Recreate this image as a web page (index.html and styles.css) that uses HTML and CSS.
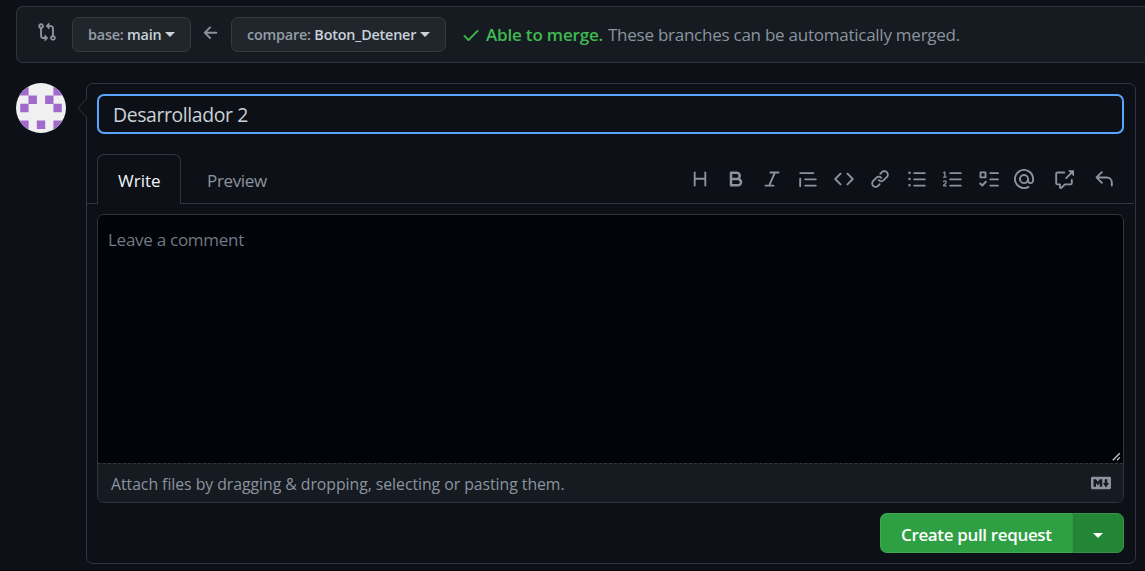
FILE: index.html
```
<!DOCTYPE html>
<html lang="en">
<head>
<meta charset="utf-8">
<title>Open a pull request</title>
<link rel="stylesheet" href="styles.css">
</head>
<body>
<section class="range">
  <svg class="icon compare-icon" viewBox="0 0 16 16"><path fill-rule="evenodd" d="M9.573.677L7.177 3.073a.25.25 0 000 .354l2.396 2.396A.25.25 0 0010 5.646V4h1a1 1 0 011 1v5.628a2.251 2.251 0 101.5 0V5A2.5 2.5 0 0011 2.5h-1V.854a.25.25 0 00-.427-.177zM6 12v-1.646a.25.25 0 01.427-.177l2.396 2.396a.25.25 0 010 .354l-2.396 2.396A.25.25 0 016 15.146V13.5H5A2.5 2.5 0 012.5 11V5.372a2.25 2.25 0 111.5 0V11a1 1 0 001 1h1zM4 3.25a.75.75 0 10-1.5 0 .75.75 0 001.5 0zM12.75 12a.75.75 0 100 1.5.75.75 0 000-1.5z"/></svg>
  <button class="branch base"><span class="label">base: <b>main</b></span><i class="caret"></i></button>
  <svg class="icon arrow-icon" viewBox="0 0 16 16"><path d="M7.78 12.53a.75.75 0 01-1.06 0L2.47 8.28a.75.75 0 010-1.06l4.25-4.25a.75.75 0 011.06 1.06L4.81 7h7.44a.75.75 0 010 1.5H4.81l2.97 2.97a.75.75 0 010 1.06z"/></svg>
  <button class="branch head"><span class="label">compare: <b>Boton_Detener</b></span><i class="caret"></i></button>
  <svg class="icon check-icon" viewBox="0 0 16 16"><path d="M13.78 4.22a.75.75 0 010 1.06l-7.25 7.25a.75.75 0 01-1.06 0L2.22 9.28a.75.75 0 011.06-1.06L6 10.94l6.72-6.72a.75.75 0 011.06 0z"/></svg>
  <strong class="able">Able to merge.</strong>
  <span class="merge-note">These branches can be automatically merged.</span>
</section>

<main class="compose">
  <svg class="avatar" viewBox="0 0 50 50">
    <clipPath id="round"><circle cx="25" cy="25" r="25"/></clipPath>
    <g clip-path="url(#round)">
      <rect width="50" height="50" fill="#f0f0f0"/>
      <path fill="#a26bcb" d="M4.2 4.2h8.4v8.4H4.2zM37.4 4.2h8.4v8.4h-8.4zM12.5 12.5h8.4v8.4h-8.4zM29.1 12.5h8.4v8.4h-8.4zM4.2 20.8h8.4v8.4H4.2zM37.4 20.8h8.4v8.4h-8.4zM4.2 37.5h8.4v8.4H4.2zM20.8 37.5h8.4v8.4h-8.4zM37.4 37.5h8.4v8.4h-8.4z"/>
    </g>
  </svg>
  <form class="box">
    <svg class="pointer" viewBox="0 0 10 20"><path d="M10 0.5L1 10l9 9.5"/></svg>
    <div class="title-input">Desarrollador 2</div>
    <div class="tabs">
      <div class="tab active"><span>Write</span></div>
      <div class="tab preview"><span>Preview</span></div>
      <div class="toolbar">
        <svg class="icon" viewBox="0 0 16 16"><path d="M3.75 2a.75.75 0 01.75.75V7h7V2.75a.75.75 0 011.5 0v10.5a.75.75 0 01-1.5 0V8.5h-7v4.75a.75.75 0 01-1.5 0V2.75A.75.75 0 013.75 2z"/></svg>
        <svg class="icon" viewBox="0 0 16 16"><path fill-rule="evenodd" d="M4 2a1 1 0 00-1 1v10a1 1 0 001 1h5.5a3.5 3.5 0 001.852-6.47A3.5 3.5 0 008.5 2H4zm4.5 5a1.5 1.5 0 100-3H5v3h3.5zM5 9v3h4.5a1.5 1.5 0 000-3H5z"/></svg>
        <svg class="icon" viewBox="0 0 16 16"><path d="M6 2.75A.75.75 0 016.75 2h6.5a.75.75 0 010 1.5h-2.505l-3.858 9H9.25a.75.75 0 010 1.5h-6.5a.75.75 0 010-1.5h2.505l3.858-9H6.75A.75.75 0 016 2.75z"/></svg>
        <svg class="icon" viewBox="0 0 16 16"><path d="M1.75 2.5a.75.75 0 000 1.5h10.5a.75.75 0 000-1.5H1.75zm4 5a.75.75 0 000 1.5h8.5a.75.75 0 000-1.5h-8.5zm0 5a.75.75 0 000 1.5h8.5a.75.75 0 000-1.5h-8.5zM2.5 7.75a.75.75 0 00-1.5 0v6a.75.75 0 001.5 0v-6z"/></svg>
        <svg class="icon" viewBox="0 0 16 16"><path d="M4.72 3.22a.75.75 0 011.06 1.06L2.06 8l3.72 3.72a.75.75 0 11-1.06 1.06L.47 8.53a.75.75 0 010-1.06l4.25-4.25zm6.56 0a.75.75 0 10-1.06 1.06L13.94 8l-3.72 3.72a.75.75 0 101.06 1.06l4.25-4.25a.75.75 0 000-1.06l-4.25-4.25z"/></svg>
        <svg class="icon" viewBox="0 0 16 16"><path d="M7.775 3.275a.75.75 0 001.06 1.06l1.25-1.25a2 2 0 112.83 2.83l-2.5 2.5a2 2 0 01-2.83 0 .75.75 0 00-1.06 1.06 3.5 3.5 0 004.95 0l2.5-2.5a3.5 3.5 0 00-4.95-4.95l-1.25 1.25zm-4.69 9.64a2 2 0 010-2.83l2.5-2.5a2 2 0 012.83 0 .75.75 0 001.06-1.06 3.5 3.5 0 00-4.95 0l-2.5 2.5a3.5 3.5 0 004.95 4.95l1.25-1.25a.75.75 0 00-1.06-1.06l-1.25 1.25a2 2 0 01-2.83 0z"/></svg>
        <svg class="icon" viewBox="0 0 16 16"><path d="M2 4a1 1 0 100-2 1 1 0 000 2zm3.75-1.5a.75.75 0 000 1.5h8.5a.75.75 0 000-1.5h-8.5zm0 5a.75.75 0 000 1.5h8.5a.75.75 0 000-1.5h-8.5zm0 5a.75.75 0 000 1.5h8.5a.75.75 0 000-1.5h-8.5zM3 8a1 1 0 11-2 0 1 1 0 012 0zm-1 6a1 1 0 100-2 1 1 0 000 2z"/></svg>
        <svg class="icon" viewBox="0 0 16 16"><path d="M2.003 2.5a.5.5 0 00-.723-.447l-1.003.5a.5.5 0 00.446.895l.28-.14V6H.5a.5.5 0 000 1h2.006a.5.5 0 100-1h-.503V2.5zM5 3.25a.75.75 0 01.75-.75h8.5a.75.75 0 010 1.5h-8.5A.75.75 0 015 3.25zm0 5a.75.75 0 01.75-.75h8.5a.75.75 0 010 1.5h-8.5A.75.75 0 015 8.25zm0 5a.75.75 0 01.75-.75h8.5a.75.75 0 010 1.5h-8.5a.75.75 0 01-.75-.75zM.924 10.32l.003-.004a.851.851 0 01.144-.153A.66.66 0 011.5 10c.195 0 .306.068.374.146a.57.57 0 01.128.376c0 .453-.269.682-.8 1.078l-.035.025C.692 11.98 0 12.495 0 13.5a.5.5 0 00.5.5h2.003a.5.5 0 000-1H1.146c.132-.197.351-.372.654-.597l.047-.035c.47-.35 1.156-.858 1.156-1.845 0-.365-.118-.744-.377-1.038-.268-.303-.658-.484-1.126-.484-.48 0-.84.202-1.068.392a1.858 1.858 0 00-.348.384.5.5 0 00.84.543z"/></svg>
        <svg class="icon" viewBox="0 0 16 16"><path class="line" d="M1.2 2.7h4v4h-4zM1 11.6l1.6 1.6 2.9-3M9 3.25h6.2M9 8.25h6.2M9 13.25h6.2"/></svg>
        <svg class="icon mention" viewBox="0 0 16 16"><path fill-rule="evenodd" d="M4.75 2.37a6.5 6.5 0 006.5 11.26.75.75 0 01.75 1.298 8 8 0 113.994-7.273.754.754 0 01.006.095v1.5a2.75 2.75 0 01-5.072 1.475A4 4 0 1112 8v1.25a1.25 1.25 0 002.5 0V7.867a6.5 6.5 0 00-9.75-5.496V2.37zM10.5 8a2.5 2.5 0 10-5 0 2.5 2.5 0 005 0z"/></svg>
        <svg class="icon wide" viewBox="0 0 16 16"><path d="M16 1.25v4.146a.25.25 0 01-.427.177L14.03 4.03l-3.75 3.75a.75.75 0 11-1.06-1.06l3.75-3.75-1.543-1.543A.25.25 0 0111.604 1h4.146a.25.25 0 01.25.25zM2.75 3.5a.25.25 0 00-.25.25v7.5c0 .138.112.25.25.25h2a.75.75 0 01.75.75v2.19l2.72-2.72a.75.75 0 01.53-.22h4.5a.25.25 0 00.25-.25v-2.5a.75.75 0 111.5 0v2.5A1.75 1.75 0 0113.25 13H9.06l-2.573 2.573A1.457 1.457 0 014 14.543V13H2.75A1.75 1.75 0 011 11.25v-7.5C1 2.784 1.784 2 2.75 2h5.5a.75.75 0 010 1.5h-5.5z"/></svg>
        <svg class="icon wide" viewBox="0 0 16 16"><path d="M6.78 1.97a.75.75 0 010 1.06L3.81 6h6.44A4.75 4.75 0 0115 10.75v2.5a.75.75 0 01-1.5 0v-2.5a3.25 3.25 0 00-3.25-3.25H3.81l2.97 2.97a.75.75 0 11-1.06 1.06L1.47 7.28a.75.75 0 010-1.06l4.25-4.25a.75.75 0 011.06 0z"/></svg>
      </div>
    </div>
    <div class="editor">
      <div class="comment">
        <span>Leave a comment</span>
        <svg class="grip" viewBox="0 0 9 9"><path d="M0.8 8.2L7.8 1.2M5 8.2L7.8 5.4"/></svg>
      </div>
      <div class="attach">
        <span>Attach files by dragging &amp; dropping, selecting or pasting them.</span>
        <svg class="icon" viewBox="0 0 16 16"><path fill-rule="evenodd" d="M14.85 3H1.15C.52 3 0 3.52 0 4.15v7.69C0 12.48.52 13 1.15 13h13.69c.64 0 1.15-.52 1.15-1.15v-7.7C16 3.52 15.48 3 14.85 3zM9 11H7V8L5.5 9.92 4 8v3H2V5h2l1.5 2L7 5h2v6zm2.99.5L9.5 8H11V5h2v3h1.5l-2.51 3.5z"/></svg>
      </div>
    </div>
    <div class="actions">
      <button type="button" class="create"><span>Create pull request</span></button>
      <button type="button" class="more"><i class="caret"></i></button>
    </div>
  </form>
</main>
</body>
</html>
```
FILE: styles.css
```
* { box-sizing: border-box; }

body {
  margin: 0;
  height: 571px;
  padding: 6px 0 0 16px;
  overflow: hidden;
  background: #0d1117;
  border-bottom: 1px solid #05070a;
  color: #c9d1d9;
  font-family: "Open Sans", "Noto Sans", sans-serif;
  white-space: nowrap;
}

button { margin: 0; padding: 0; font-family: inherit; text-align: left; }

.icon { display: block; flex: none; width: 20px; height: 20px; fill: #8b949e; }

.caret {
  flex: none;
  width: 10px;
  height: 5px;
  background: currentColor;
  clip-path: polygon(0 0, 100% 0, 50% 100%);
}

.range {
  display: flex;
  align-items: center;
  height: 57px;
  padding-left: 20px;
  border: 1px solid #30363d;
  border-right: 0;
  border-radius: 7px 0 0 7px;
  background: #161b22;
}

.compare-icon { margin: 0 15px 5px 0; }
.arrow-icon { margin: 0 10px 3px; }
.check-icon { margin: 1px 5px 0 15px; fill: #3fb950; }

.branch {
  display: flex;
  align-items: center;
  flex: none;
  height: 35px;
  padding-left: 15px;
  border: 1px solid #363b42;
  border-radius: 7px;
  background: #21262d;
  color: #c9d1d9;
  font-size: 14.4px;
  font-weight: 600;
}
.branch .label { flex: none; color: #959da6; }
.branch b { color: #c9d1d9; font-weight: 600; }
.base { width: 119px; }
.base .label { width: 77px; letter-spacing: -0.2px; }
.head { width: 215px; }
.head .label { width: 173px; letter-spacing: -0.2px; }

.able { width: 122px; color: #3fb950; font-size: 17px; font-weight: 600; letter-spacing: -0.18px; }
.merge-note { color: #8b949e; font-size: 17px; letter-spacing: -0.25px; }

.compose { display: flex; gap: 20px; margin-top: 20px; }
.avatar { flex: none; width: 50px; height: 50px; }

.box {
  position: relative;
  display: flex;
  flex-direction: column;
  width: 1050px;
  height: 481px;
  border: 1px solid #30363d;
  border-radius: 7px;
}

.pointer { position: absolute; left: -10px; top: 14px; width: 10px; height: 20px; fill: #0d1117; stroke: #30363d; }

.title-input {
  height: 40px;
  margin: 10px 11px 0 10px;
  padding-left: 14px;
  border: 2px solid #58a6ff;
  border-radius: 7px;
  font-size: 19.4px;
  line-height: 37px;
  letter-spacing: -0.38px;
}

.tabs {
  display: flex;
  height: 50px;
  margin: 20px 1px 0 0;
  padding-left: 10px;
  box-shadow: inset 0 -1px #30363d;
}
.tab { font-size: 17px; line-height: 51px; }
.active {
  width: 84px;
  padding-left: 20px;
  border: 1px solid #30363d;
  border-bottom: 0;
  border-radius: 7px 7px 0 0;
  background: #0d1117;
  color: #f0f6fc;
}
.preview { padding-left: 26px; color: #8b949e; line-height: 53px; letter-spacing: -0.35px; }

.toolbar { display: flex; gap: 16.2px; margin: 15px 20px 0 auto; }
.mention { margin-left: -1.2px; }
.wide { margin-left: 3.8px; }
.line { fill: none; stroke: #8b949e; stroke-width: 1.5; stroke-linecap: round; stroke-linejoin: round; }

.editor {
  display: flex;
  flex-direction: column;
  height: 289px;
  margin: 10px 11px 0 10px;
  overflow: hidden;
  border: 1px solid #30363d;
  border-radius: 7px;
}
.comment {
  position: relative;
  height: 248px;
  padding-left: 10px;
  background: #010409;
  color: #717983;
  font-size: 17px;
  line-height: 50px;
  letter-spacing: -0.27px;
}
.grip { position: absolute; right: 2px; bottom: 2px; width: 9px; height: 9px; fill: none; stroke: #c8c8c8; stroke-width: 1.3; }
.attach {
  display: flex;
  align-items: center;
  justify-content: space-between;
  flex: 1;
  padding: 1px 12px 0 13px;
  border-top: 1px dashed #30363d;
  background: #161b22;
  color: #8b949e;
  font-size: 15.8px;
  letter-spacing: -0.04px;
}
.attach .icon { margin-bottom: 1px; }

.actions { display: flex; justify-content: flex-end; margin: 10px 11px 0 0; }
.create, .more {
  display: flex;
  align-items: center;
  height: 40px;
  border: 1px solid #3fa652;
  color: #fff;
}
.create {
  width: 192px;
  padding: 2px 0 0 20px;
  border-right: 0;
  border-radius: 7px 0 0 7px;
  background: #2ea043;
  font-size: 17px;
  font-weight: 600;
  letter-spacing: -0.35px;
}
.more {
  justify-content: center;
  width: 52px;
  padding-top: 5px;
  border-color: #38924a;
  border-radius: 0 7px 7px 0;
  background: #238636;
}
```
